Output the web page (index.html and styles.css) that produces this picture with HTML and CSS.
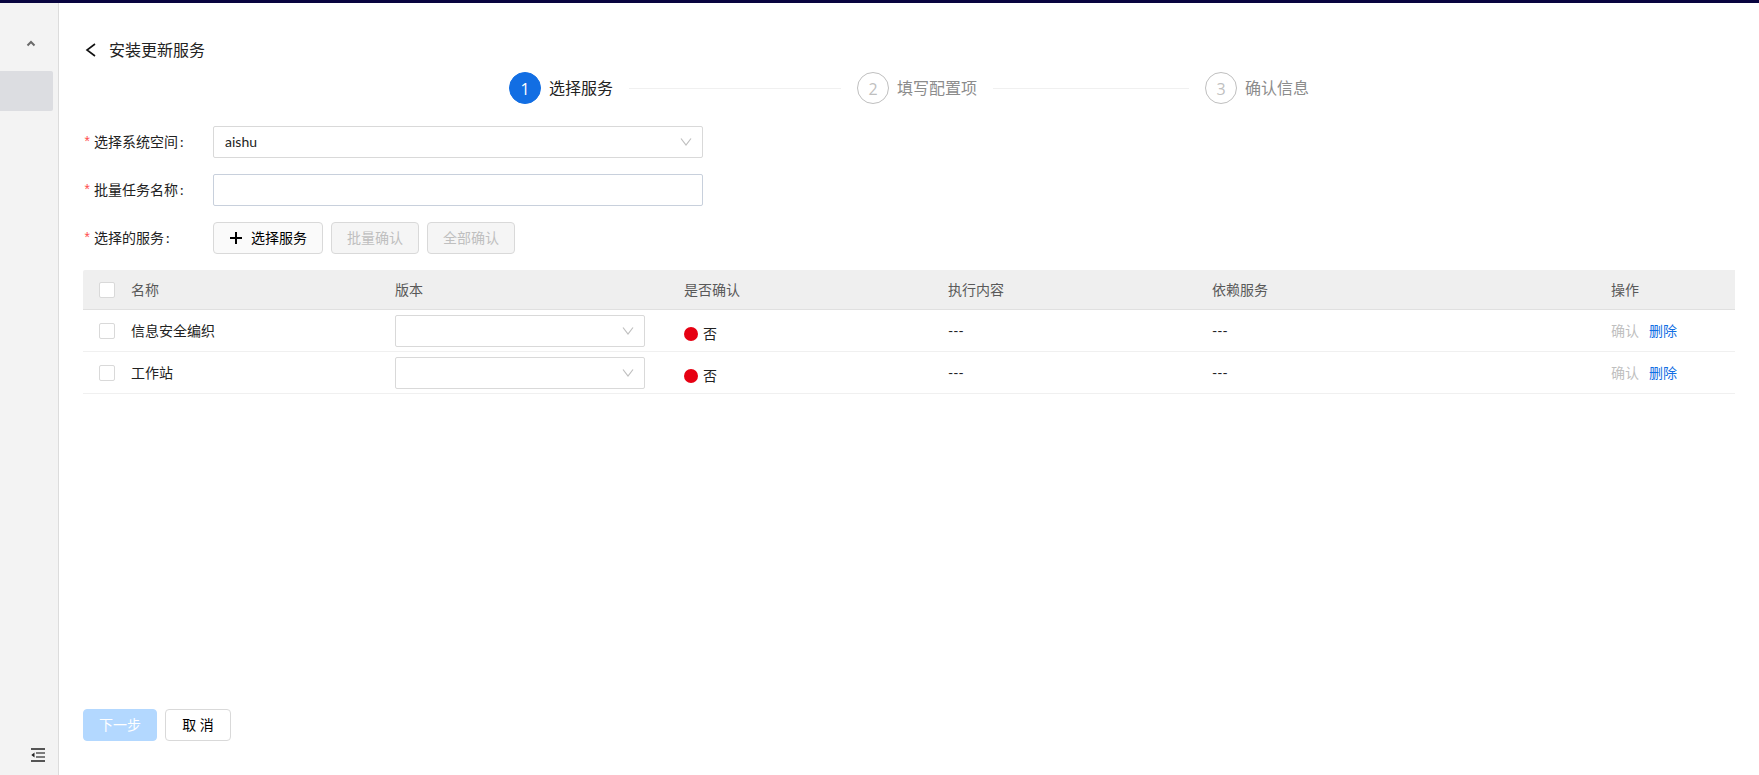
FILE: index.html
```html
<!DOCTYPE html>
<html lang="zh-CN">
<head>
    <meta charset="UTF-8">
    <meta name="viewport" content="width=device-width, initial-scale=1.0">
    <title>安装更新服务</title>
    <link rel="stylesheet" href="styles.css">
</head>
<body>
    <div class="layout">
        <nav class="sidebar">
            <button class="icon-button collapse-group" type="button" aria-label="收起分组">
                <svg width="10" height="8" viewBox="0 0 10 8"><path d="M1.5 6.5 5 3l3.5 3.5" fill="none" stroke="#6a6a6a" stroke-width="2"/></svg>
            </button>
            <a class="menu-item active" href="#" aria-label="服务管理"></a>
            <button class="icon-button fold-menu" type="button" aria-label="折叠菜单">
                <svg width="14" height="14" viewBox="0 0 14 14">
                    <path d="M0 1h14M0 13h14" fill="none" stroke="#222" stroke-width="1.3"/>
                    <path d="M5 5h9M5 9h9" fill="none" stroke="#555" stroke-width="1.3"/>
                    <path d="M3.5 4.500v5L.3 7z" fill="#222"/>
                </svg>
            </button>
        </nav>

        <main class="content">
            <header class="page-header">
                <button class="icon-button" type="button" aria-label="返回">
                    <svg width="16" height="16" viewBox="0 0 16 16"><path d="M12 2 4 8l8 6" fill="none" stroke="#111" stroke-width="1.6"/></svg>
                </button>
                <h1>安装更新服务</h1>
            </header>

            <ol class="steps">
                <li class="step active"><span class="step-icon">1</span><span class="step-title">选择服务</span></li>
                <li class="step"><span class="step-icon">2</span><span class="step-title">填写配置项</span></li>
                <li class="step"><span class="step-icon">3</span><span class="step-title">确认信息</span></li>
            </ol>

            <form class="form">
                <div class="form-row">
                    <label class="required" for="namespace">选择系统空间</label>
                    <div class="select-box form-control">
                        <select id="namespace"><option>aishu</option></select>
                        <svg class="arrow" width="12" height="12" viewBox="0 0 12 12"><path d="M1 2.5 6 9l5-6.5" fill="none" stroke="#bfbfbf" stroke-width="1.2"/></svg>
                    </div>
                </div>
                <div class="form-row">
                    <label class="required" for="task-name">批量任务名称</label>
                    <input class="text-input form-control" id="task-name" type="text">
                </div>
                <div class="form-row">
                    <span class="required">选择的服务</span>
                    <div class="button-group">
                        <button class="btn btn-add" type="button">
                            <svg width="14" height="14" viewBox="0 0 14 14"><path d="M1 7h12M7 1v12" fill="none" stroke="#000" stroke-width="2"/></svg>
                            选择服务
                        </button>
                        <button class="btn" type="button" disabled>批量确认</button>
                        <button class="btn" type="button" disabled>全部确认</button>
                    </div>
                </div>
            </form>

            <table class="service-table">
                <colgroup>
                    <col class="col-check">
                    <col class="col-text">
                    <col class="col-version">
                    <col class="col-text">
                    <col class="col-text">
                    <col>
                    <col class="col-action">
                </colgroup>
                <thead>
                    <tr>
                        <th class="check"><input type="checkbox" aria-label="全选"></th>
                        <th>名称</th>
                        <th>版本</th>
                        <th>是否确认</th>
                        <th>执行内容</th>
                        <th>依赖服务</th>
                        <th>操作</th>
                    </tr>
                </thead>
                <tbody>
                    <tr>
                        <td class="check"><input type="checkbox" aria-label="选择信息安全编织"></td>
                        <td>信息安全编织</td>
                        <td>
                            <div class="select-box">
                                <select aria-label="信息安全编织版本"><option></option></select>
                                <svg class="arrow" width="12" height="12" viewBox="0 0 12 12"><path d="M1 2.5 6 9l5-6.5" fill="none" stroke="#bfbfbf" stroke-width="1.2"/></svg>
                            </div>
                        </td>
                        <td class="status"><span class="dot"></span>否</td>
                        <td>---</td>
                        <td>---</td>
                        <td><div class="actions"><button type="button" disabled>确认</button><button type="button">删除</button></div></td>
                    </tr>
                    <tr>
                        <td class="check"><input type="checkbox" aria-label="选择工作站"></td>
                        <td>工作站</td>
                        <td>
                            <div class="select-box">
                                <select aria-label="工作站版本"><option></option></select>
                                <svg class="arrow" width="12" height="12" viewBox="0 0 12 12"><path d="M1 2.5 6 9l5-6.5" fill="none" stroke="#bfbfbf" stroke-width="1.2"/></svg>
                            </div>
                        </td>
                        <td class="status"><span class="dot"></span>否</td>
                        <td>---</td>
                        <td>---</td>
                        <td><div class="actions"><button type="button" disabled>确认</button><button type="button">删除</button></div></td>
                    </tr>
                </tbody>
            </table>

            <footer class="page-footer">
                <button class="btn btn-primary" type="button" disabled>下一步</button>
                <button class="btn" type="button">取 消</button>
            </footer>
        </main>
    </div>
</body>
</html>
```

FILE: styles.css
```css
* {
    box-sizing: border-box;
}

body {
    margin: 0;
    font-family: Lato, "Noto Sans CJK SC", sans-serif;
    font-size: 14px;
    line-height: 22px;
    color: #222;
    background-color: #fff;
}

button, input, select {
    font: inherit;
    color: inherit;
}

svg {
    display: block;
    flex: none;
}

.layout {
    display: flex;
    min-height: 100vh;
    border-top: 3px solid #08043f;
}

.icon-button {
    padding: 0;
    border: 0;
    background: none;
    cursor: pointer;
}

/* sidebar */
.sidebar {
    display: flex;
    flex-direction: column;
    flex: none;
    width: 59px;
    padding: 36px 0 13px;
    background-color: #f3f3f3;
    border-right: 1px solid #dcdcdc;
}

.collapse-group {
    align-self: flex-start;
    margin-left: 26px;
}

.menu-item {
    height: 40px;
    margin: 24px 5px 0 0;
    border-radius: 0 2px 2px 0;
}

.menu-item.active {
    background-color: #dcdde1;
}

.fold-menu {
    margin: auto 13px 0 auto;
}

/* content */
.content {
    display: flex;
    flex-direction: column;
    flex: 1;
    min-width: 0;
    padding: 35px 24px 34px;
}

.page-header {
    display: flex;
    align-items: center;
    gap: 10px;
    height: 24px;
}

h1 {
    margin: 0;
    font-size: 16px;
    font-weight: 400;
}

.steps {
    display: flex;
    gap: 16px;
    width: 100%;
    max-width: 800px;
    margin: 10px auto 22px;
    padding: 0;
    list-style: none;
    font-size: 16px;
    line-height: 32px;
}

.step {
    display: flex;
    align-items: center;
    flex: 1;
    white-space: nowrap;
    color: #8c8c8c;
}

.step:last-child {
    flex: none;
}

.step:not(:last-child)::after {
    content: "";
    flex: 1;
    height: 1px;
    margin-left: 16px;
    background-color: #f0f0f0;
}

.step-icon {
    width: 32px;
    height: 32px;
    margin-right: 8px;
    border: 1px solid #bfbfbf;
    border-radius: 50%;
    font-family: "Open Sans", sans-serif;
    line-height: 32px;
    text-align: center;
    color: #bfbfbf;
}

.step.active {
    color: #222;
}

.step.active .step-icon {
    color: #fff;
    background-color: #126ee3;
    border-color: #126ee3;
}

/* form */
.form {
    display: grid;
    gap: 16px;
    margin-bottom: 16px;
}

.form-row {
    display: grid;
    grid-template-columns: 130px 1fr;
    align-items: center;
}

.required::before {
    content: "*";
    display: inline-block;
    width: 11px;
    font-family: "Liberation Mono", monospace;
    color: #ff4d4f;
}

.required::after {
    content: ":";
    margin-left: 2px;
}

.form-control {
    width: 100%;
    max-width: 490px;
}

.text-input {
    height: 32px;
    padding: 4px 11px;
    border: 1px solid #c8d0dc;
    border-radius: 2px;
}

.select-box {
    display: grid;
    align-items: center;
}

.select-box select, .select-box .arrow {
    grid-area: 1 / 1;
}

.select-box select {
    width: 100%;
    height: 32px;
    padding: 0 11px;
    border: 1px solid #d9d9d9;
    border-radius: 2px;
    background-color: #fff;
    appearance: none;
}

.select-box .arrow {
    justify-self: end;
    margin-right: 11px;
    pointer-events: none;
}

.button-group {
    display: flex;
    gap: 8px;
}

.btn {
    display: flex;
    align-items: center;
    justify-content: center;
    gap: 8px;
    min-width: 66px;
    height: 32px;
    padding: 0 15px;
    border: 1px solid #d9d9d9;
    border-radius: 4px;
    background-color: #fff;
    color: #000;
    cursor: pointer;
}

.btn-add {
    background-color: #fafafa;
}

.btn:disabled {
    color: #bfbfbf;
    background-color: #f5f5f5;
    cursor: not-allowed;
}

.btn-primary:disabled {
    color: #fff;
    background-color: #b3d8ff;
    border-color: #b3d8ff;
}

/* table */
.service-table {
    width: 100%;
    table-layout: fixed;
    border-collapse: separate;
    border-spacing: 0;
}

.col-check {
    width: 32px;
}

.col-text {
    width: 264px;
}

.col-version {
    width: 289px;
}

.col-action {
    width: 140px;
}

th, td {
    padding: 0 16px;
    text-align: left;
    border-bottom: 1px solid #f0f0f0;
}

th {
    height: 40px;
    font-weight: 400;
    color: #595959;
    background-color: #efefef;
    border-bottom-color: #e0e0e0;
}

th:first-child {
    border-top-left-radius: 2px;
}

td {
    height: 42px;
}

.check {
    padding: 0 0 0 16px;
}

.check input {
    display: block;
    width: 16px;
    height: 16px;
    margin: 0;
    border: 1px solid #d9d9d9;
    border-radius: 2px;
    background-color: #fff;
    appearance: none;
}

td .select-box {
    max-width: 250px;
}

.status {
    padding-top: 6px;
}

.dot {
    display: inline-block;
    width: 14px;
    height: 14px;
    margin-right: 5px;
    border-radius: 50%;
    background-color: #e60012;
    vertical-align: -2px;
}

.actions {
    display: flex;
    gap: 10px;
}

.actions button {
    padding: 0;
    border: 0;
    background: none;
    color: #126ee3;
    cursor: pointer;
}

.actions button:disabled {
    color: #bfbfbf;
    cursor: not-allowed;
}

.page-footer {
    display: flex;
    gap: 8px;
    margin-top: auto;
}
```
